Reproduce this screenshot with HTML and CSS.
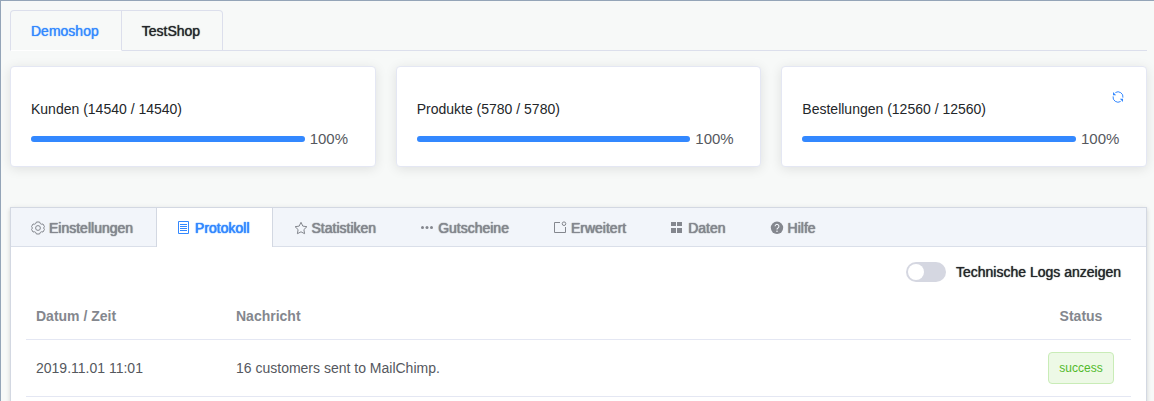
FILE: index.html
```html
<!DOCTYPE html>
<html lang="de">
<head>
    <meta charset="UTF-8">
    <meta name="viewport" content="width=device-width, initial-scale=1.0">
    <title>Protokoll</title>
    <link rel="stylesheet" href="styles.css">
</head>
<body>
    <div class="page">
        <nav class="shop-tabs" role="tablist">
            <button type="button" class="shop-tab active" role="tab" aria-selected="true">Demoshop</button>
            <button type="button" class="shop-tab" role="tab" aria-selected="false">TestShop</button>
        </nav>

        <section class="cards">
            <div class="card">
                <h2 class="card-title">Kunden (14540 / 14540)</h2>
                <div class="progress">
                    <div class="progress-bar"><div class="progress-fill" style="width: 100%"></div></div>
                    <span class="progress-text">100%</span>
                </div>
            </div>

            <div class="card">
                <h2 class="card-title">Produkte (5780 / 5780)</h2>
                <div class="progress">
                    <div class="progress-bar"><div class="progress-fill" style="width: 100%"></div></div>
                    <span class="progress-text">100%</span>
                </div>
            </div>

            <div class="card">
                <button type="button" class="refresh" aria-label="Aktualisieren">
                    <svg viewBox="0 0 14 14" width="14" height="14" fill="none" stroke="currentColor">
                        <path d="M4.4 2.5A5 5 0 0 1 11.9 7.6M9.6 11.5A5 5 0 0 1 2.1 6.4"/>
                        <path d="M2 2v3.2h3.2zM12 12V8.8H8.8z" fill="currentColor" stroke="none"/>
                    </svg>
                </button>
                <h2 class="card-title">Bestellungen (12560 / 12560)</h2>
                <div class="progress">
                    <div class="progress-bar"><div class="progress-fill" style="width: 100%"></div></div>
                    <span class="progress-text">100%</span>
                </div>
            </div>
        </section>

        <section class="panel">
            <nav class="panel-tabs" role="tablist">
                <button type="button" class="panel-tab" role="tab">
                    <svg class="icon" viewBox="0 0 14 14" fill="none" stroke="currentColor">
                        <path d="M5.4 1h3.2l.6 1.5 1.2.7 1.6-.2 1.5 2.7-1 1.3 1 1.3-1.5 2.7-1.6-.2-1.2.7-.6 1.5H5.4l-.6-1.5-1.2-.7-1.6.2L.5 8.3l1-1.3-1-1.3L2 3l1.6.2 1.2-.7z" stroke-linejoin="round"/>
                        <circle cx="7" cy="7" r="2.4"/>
                    </svg>
                    Einstellungen
                </button>
                <button type="button" class="panel-tab active" role="tab" aria-selected="true">
                    <svg class="icon" viewBox="0 0 14 14" fill="none" stroke="currentColor">
                        <path d="M1.5 .5h10v12h-10zM3 3.5h7M3 5.5h7M3 7.5h7M3 9.5h7"/>
                    </svg>
                    Protokoll
                </button>
                <button type="button" class="panel-tab" role="tab">
                    <svg class="icon" viewBox="0 0 14 14" fill="none" stroke="currentColor">
                        <path d="M7 1.3l1.8 3.8 4.1.6-3 2.9.7 4.1L7 10.8l-3.6 1.9.7-4.1-3-2.9 4.1-.6z" stroke-linejoin="round"/>
                    </svg>
                    Statistiken
                </button>
                <button type="button" class="panel-tab" role="tab">
                    <svg class="icon" viewBox="0 0 14 14" fill="currentColor">
                        <circle cx="2.5" cy="6.5" r="1.5"/>
                        <circle cx="7" cy="6.5" r="1.5"/>
                        <circle cx="11.5" cy="6.5" r="1.5"/>
                    </svg>
                    Gutscheine
                </button>
                <button type="button" class="panel-tab" role="tab">
                    <svg class="icon" viewBox="0 0 14 14" fill="none" stroke="currentColor">
                        <path d="M7 1.5H1.5v10h11V6"/>
                        <circle cx="11" cy="2.7" r="1.8"/>
                    </svg>
                    Erweitert
                </button>
                <button type="button" class="panel-tab" role="tab">
                    <svg class="icon" viewBox="0 0 14 14" fill="currentColor">
                        <path d="M1 1h5v4H1zM7 1h5v4H7zM1 7h5v5H1zM7 7h5v5H7z"/>
                    </svg>
                    Daten
                </button>
                <button type="button" class="panel-tab" role="tab">
                    <svg class="icon" viewBox="0 0 14 14">
                        <circle cx="7" cy="6.8" r="6.2" fill="currentColor"/>
                        <path d="M5.1 5.3a1.9 1.9 0 1 1 2.9 1.6Q7 7.4 7 8.5" fill="none" stroke="#f2f5fa" stroke-width="1.1"/>
                        <circle cx="7" cy="10.2" r="0.8" fill="#f2f5fa"/>
                    </svg>
                    Hilfe
                </button>
            </nav>

            <div class="panel-body">
                <div class="log-toggle">
                    <input type="checkbox" class="switch" id="technicalLogs">
                    <label for="technicalLogs">Technische Logs anzeigen</label>
                </div>

                <table class="log-table">
                    <thead>
                        <tr>
                            <th class="col-date">Datum / Zeit</th>
                            <th>Nachricht</th>
                            <th class="col-status">Status</th>
                        </tr>
                    </thead>
                    <tbody>
                        <tr>
                            <td>2019.11.01 11:01</td>
                            <td>16 customers sent to MailChimp.</td>
                            <td class="col-status"><span class="tag">success</span></td>
                        </tr>
                    </tbody>
                </table>
            </div>
        </section>
    </div>
</body>
</html>
```
FILE: styles.css
```css
:root {
    --primary: #3388ff;
    --page-bg: #f7f9f8;
    --border: #dcdfec;
    --border-light: #e4e7f3;
    --text: #232629;
    --text-regular: #55585e;
    --text-muted: #84878e;
}

* {
    margin: 0;
    padding: 0;
    box-sizing: border-box;
}

body {
    color: var(--text);
    font-family: "Liberation Sans", Arial, sans-serif;
    font-size: 14px;
}

button {
    background: none;
    border: none;
    font: inherit;
    cursor: pointer;
}

.page {
    height: 100vh;
    overflow: hidden;
    display: flex;
    flex-direction: column;
    padding: 9px 7px 0 9px;
    background: var(--page-bg);
    border-top: 1px solid #94a5b8;
    border-left: 1px solid #94a5b8;
}

/* Shop tabs */
.shop-tabs {
    display: flex;
    flex-shrink: 0;
    height: 41px;
    border-bottom: 1px solid var(--border);
}

.shop-tab {
    height: 41px;
    padding: 0 22px 0 20px;
    border: 1px solid var(--border);
    border-left: none;
    color: var(--text);
}

/* medium weight: regular letters, thickened a little */
.shop-tab,
.log-toggle {
    text-shadow: 0 0 1px currentColor;
}

.panel-tab {
    text-shadow: 0 0 1px currentColor, 0 0 1px currentColor;
}

.shop-tab:first-child {
    border-left: 1px solid var(--border);
    border-top-left-radius: 4px;
}

.shop-tab:last-child {
    border-top-right-radius: 4px;
}

.shop-tab.active {
    color: var(--primary);
    border-bottom-color: #fff;
}

/* Cards */
.cards {
    display: grid;
    grid-template-columns: repeat(3, 1fr);
    gap: 20px;
    margin-top: 15px;
}

.card {
    padding: 20px;
    background: #fff;
    border: 1px solid var(--border-light);
    border-radius: 4px;
    box-shadow: 0 2px 12px rgba(0, 0, 0, 0.1);
}

.refresh {
    float: right;
    height: 20px;
    padding: 3px 1px;
    color: var(--primary);
}

.refresh svg {
    display: block;
}

.card-title {
    padding-top: 13px;
    font-size: 14px;
    font-weight: normal;
    line-height: 18px;
}

.progress {
    display: flex;
    align-items: center;
    margin-top: 14px;
    line-height: 14px;
}

.progress-bar {
    flex: 1;
    height: 6px;
    background: #ebeef5;
    border-radius: 3px;
}

.progress-fill {
    height: 6px;
    background: var(--primary);
    border-radius: 3px;
}

.progress-text {
    width: 50px;
    padding-left: 5px;
    color: var(--text-regular);
    font-size: 15px;
}

/* Panel */
.panel {
    flex: 1 0 auto;
    margin-top: 40px;
    background: #fff;
    border: 1px solid #d3d8e2;
    box-shadow: 0 2px 4px rgba(0, 0, 0, 0.12), 0 0 6px rgba(0, 0, 0, 0.04);
}

.panel-tabs {
    display: flex;
    height: 39px;
    background: #f2f5fa;
    border-bottom: 1px solid #dadfe9;
}

.panel-tab {
    display: flex;
    align-items: center;
    gap: 4px;
    height: 39px;
    padding: 0 22px 0 20px;
    border: 1px solid transparent;
    border-top: none;
    border-bottom: none;
    color: var(--text-muted);
}

.panel-tab:first-child {
    border-left: none;
}

.panel-tab.active {
    background: #fff;
    border-color: #d3d8e2;
    color: var(--primary);
}

.icon {
    width: 14px;
    height: 14px;
}

.panel-body {
    padding: 15px;
}

.log-toggle {
    display: flex;
    justify-content: flex-end;
    align-items: center;
    gap: 10px;
    height: 20px;
    margin: 0 10px 10px 0;
}

.switch {
    appearance: none;
    width: 40px;
    height: 20px;
    padding: 2px;
    background: #d5d7e1;
    border-radius: 10px;
    cursor: pointer;
}

.switch::before {
    content: "";
    display: block;
    width: 16px;
    height: 16px;
    background: #fff;
    border-radius: 50%;
}

.switch:checked {
    background: var(--primary);
}

.switch:checked::before {
    margin-left: 20px;
}

.log-table {
    width: 100%;
    table-layout: fixed;
    border-collapse: separate;
    border-spacing: 0;
    line-height: 23px;
}

.log-table th,
.log-table td {
    padding: 12px 10px;
    border-bottom: 1px solid var(--border-light);
    text-align: left;
}

.log-table th {
    padding: 13px 10px 11px;
    color: var(--text-muted);
}

.log-table td {
    color: var(--text-regular);
}

.log-table .col-date {
    width: 200px;
}

.log-table .col-status {
    width: 100px;
    text-align: center;
}

.tag {
    display: block;
    width: fit-content;
    height: 32px;
    margin: 0 auto;
    padding: 0 10px;
    background: #edf9e6;
    border: 1px solid #c9ecb7;
    border-radius: 4px;
    color: #52b92a;
    font-size: 12px;
    line-height: 30px;
}
```
